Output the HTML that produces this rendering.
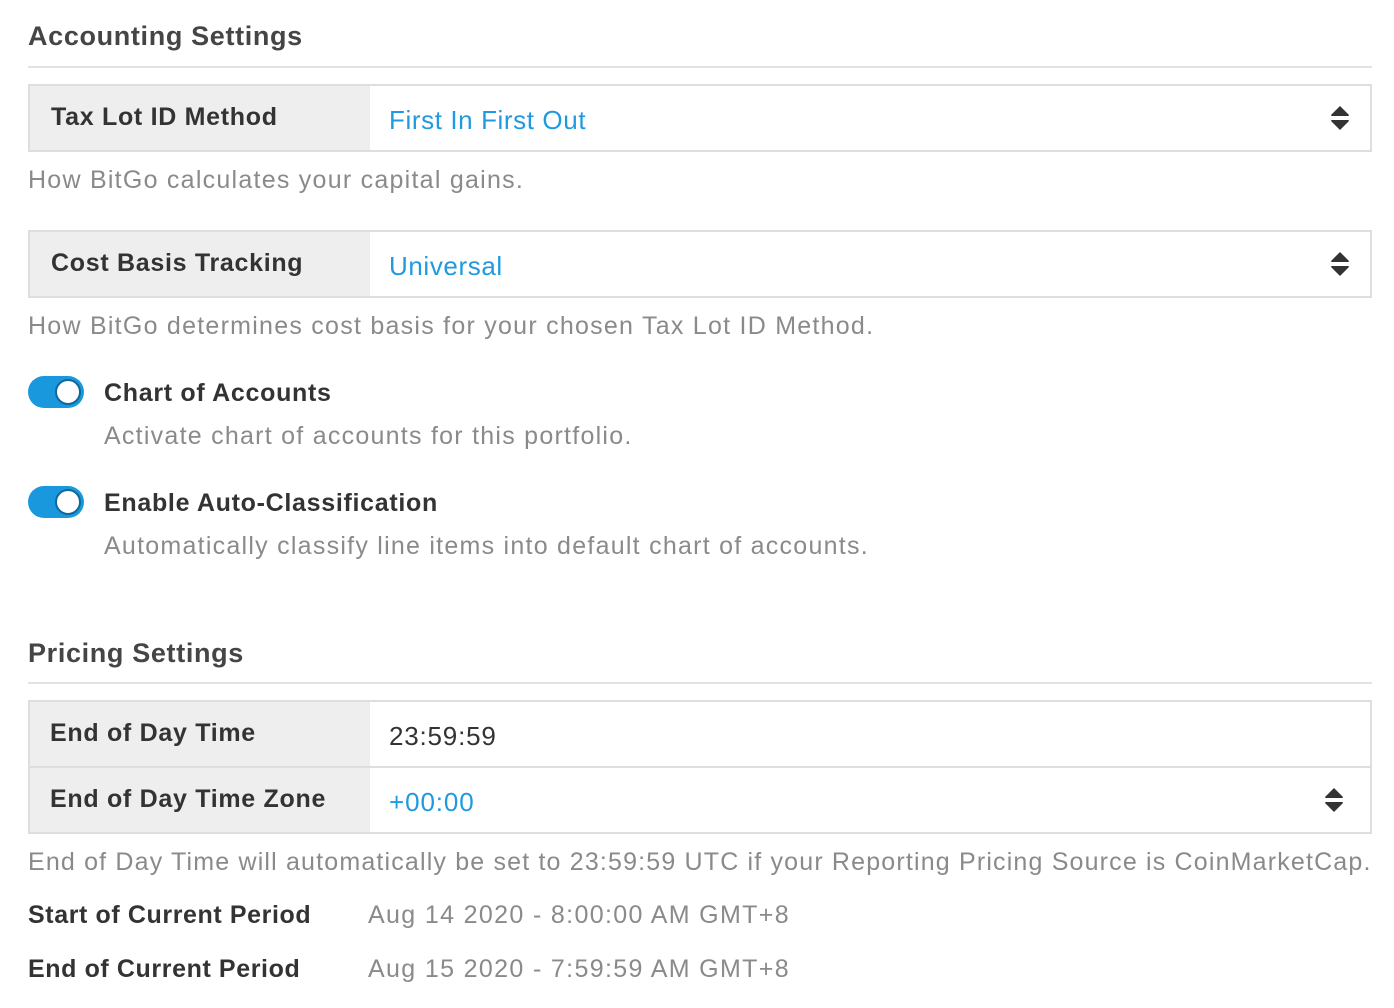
<!DOCTYPE html>
<html><head><meta charset="utf-8"><style>
*{margin:0;padding:0;box-sizing:border-box}
body{width:1394px;height:1008px;background:#fff;font-family:"Liberation Sans",sans-serif;position:relative;overflow:hidden;color:#333}
.a{position:absolute;white-space:nowrap}
.h{font-size:27px;color:#454545;letter-spacing:0.65px;font-weight:bold}
.hr{position:absolute;left:28px;width:1344px;height:2px;background:#e2e2e2}
.box{position:absolute;left:28px;width:1344px;border:2px solid #dedede;background:#fff}
.lab{position:absolute;left:0;top:0;bottom:0;width:340px;background:#eee}
.lt{font-size:25px;font-weight:bold;color:#333;letter-spacing:0.7px}
.val{font-size:26px;color:#1f9ae0;letter-spacing:0.6px}
.help{font-size:25px;color:#8a8a8a;letter-spacing:1.25px}
.tg{position:absolute;left:28px;width:56px;height:32px;border-radius:16px;background:#1a98de}
.tg:after{content:"";position:absolute;left:27px;top:3px;width:26px;height:26px;border-radius:50%;background:#fff;border:2px solid #10679b;box-sizing:border-box}
</style></head><body>
<div class="a h" style="left:28px;top:21px">Accounting Settings</div>
<div class="hr" style="top:66px"></div>

<div class="box" style="top:84px;height:68px"><div class="lab"></div></div>
<div class="a lt" style="left:51px;top:103px">Tax Lot ID Method</div>
<div class="a val" style="left:389px;top:105px">First In First Out</div>
<svg class="a" style="left:1330px;top:105px" width="20" height="26" viewBox="0 0 20 26"><path d="M10 1 L19 10 Q19 11 18 11 L2 11 Q1 11 1 10 Z" fill="#333"/><path d="M10 25 L19 16 Q19 15 18 15 L2 15 Q1 15 1 16 Z" fill="#333"/></svg>
<div class="a help" style="left:28px;top:166px">How BitGo calculates your capital gains.</div>

<div class="box" style="top:230px;height:68px"><div class="lab"></div></div>
<div class="a lt" style="left:51px;top:249px">Cost Basis Tracking</div>
<div class="a val" style="left:389px;top:251px">Universal</div>
<svg class="a" style="left:1330px;top:251px" width="20" height="26" viewBox="0 0 20 26"><path d="M10 1 L19 10 Q19 11 18 11 L2 11 Q1 11 1 10 Z" fill="#333"/><path d="M10 25 L19 16 Q19 15 18 15 L2 15 Q1 15 1 16 Z" fill="#333"/></svg>
<div class="a help" style="left:28px;top:312px">How BitGo determines cost basis for your chosen Tax Lot ID Method.</div>

<div class="tg" style="top:376px"></div>
<div class="a lt" style="left:104px;top:379px">Chart of Accounts</div>
<div class="a help" style="left:104px;top:422px">Activate chart of accounts for this portfolio.</div>

<div class="tg" style="top:486px"></div>
<div class="a lt" style="left:104px;top:489px">Enable Auto-Classification</div>
<div class="a help" style="left:104px;top:532px">Automatically classify line items into default chart of accounts.</div>

<div class="a h" style="left:28px;top:638px">Pricing Settings</div>
<div class="hr" style="top:682px"></div>

<div class="box" style="top:700px;height:134px"><div class="lab"></div><div style="position:absolute;left:0;right:0;top:64px;height:2px;background:#dedede"></div></div>
<div class="a lt" style="left:50px;top:719px">End of Day Time</div>
<div class="a" style="left:389px;top:721px;font-size:26px;color:#333;letter-spacing:0.8px">23:59:59</div>
<div class="a lt" style="left:50px;top:785px">End of Day Time Zone</div>
<div class="a val" style="left:389px;top:787px;letter-spacing:0.9px">+00:00</div>
<svg class="a" style="left:1324px;top:787px" width="20" height="26" viewBox="0 0 20 26"><path d="M10 1 L19 10 Q19 11 18 11 L2 11 Q1 11 1 10 Z" fill="#333"/><path d="M10 25 L19 16 Q19 15 18 15 L2 15 Q1 15 1 16 Z" fill="#333"/></svg>
<div class="a help" style="left:28px;top:848px;letter-spacing:1.17px">End of Day Time will automatically be set to 23:59:59 UTC if your Reporting Pricing Source is CoinMarketCap.</div>

<div class="a lt" style="left:28px;top:901px;letter-spacing:0.6px">Start of Current Period</div>
<div class="a help" style="left:368px;top:901px;letter-spacing:1.35px">Aug 14 2020 - 8:00:00 AM GMT+8</div>
<div class="a lt" style="left:28px;top:955px;letter-spacing:0.6px">End of Current Period</div>
<div class="a help" style="left:368px;top:955px;letter-spacing:1.35px">Aug 15 2020 - 7:59:59 AM GMT+8</div>
</body></html>
